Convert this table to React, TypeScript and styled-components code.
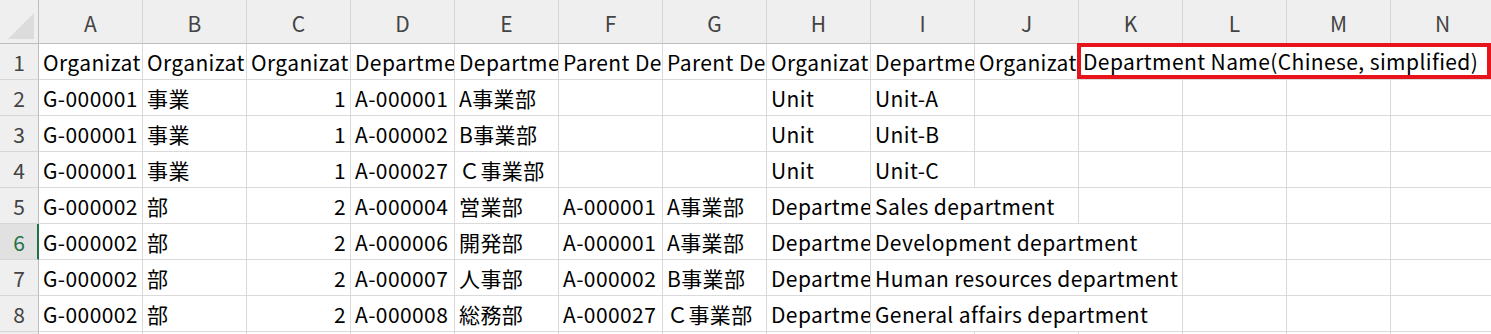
import styled, { createGlobalStyle } from 'styled-components';

const GlobalStyle = createGlobalStyle`
  html, body {
    margin: 0;
    padding: 0;
    background: #ffffff;
    overflow: hidden;
  }
  body {
    font-family: "Noto Sans CJK JP", "Noto Sans", sans-serif;
  }
`;

const COLS = ['A', 'B', 'C', 'D', 'E', 'F', 'G', 'H', 'I', 'J', 'K', 'L', 'M', 'N'];

type CellData = {
  text?: string;
  span?: number;
  align?: 'left' | 'right';
  mark?: boolean;
};

// each row lists its cells left to right; a span covers the empty cells the text runs into
const rows: CellData[][] = [
  [
    { text: 'Organization Code' },
    { text: 'Organization Level Name' },
    { text: 'Organization Level' },
    { text: 'Department Code' },
    { text: 'Department Name' },
    { text: 'Parent Department Code' },
    { text: 'Parent Department Name' },
    { text: 'Organization Level Name(English)' },
    { text: 'Department Name(English)' },
    { text: 'Organization Level Name(Chinese)' },
    { text: 'Department Name(Chinese, simplified)', span: 4, mark: true },
  ],
  [
    { text: 'G-000001' }, { text: '事業' }, { text: '1', align: 'right' }, { text: 'A-000001' },
    { text: 'A事業部' }, {}, {}, { text: 'Unit' }, { text: 'Unit-A' }, {}, {}, {}, {}, {},
  ],
  [
    { text: 'G-000001' }, { text: '事業' }, { text: '1', align: 'right' }, { text: 'A-000002' },
    { text: 'B事業部' }, {}, {}, { text: 'Unit' }, { text: 'Unit-B' }, {}, {}, {}, {}, {},
  ],
  [
    { text: 'G-000001' }, { text: '事業' }, { text: '1', align: 'right' }, { text: 'A-000027' },
    { text: 'Ｃ事業部' }, {}, {}, { text: 'Unit' }, { text: 'Unit-C' }, {}, {}, {}, {}, {},
  ],
  [
    { text: 'G-000002' }, { text: '部' }, { text: '2', align: 'right' }, { text: 'A-000004' },
    { text: '営業部' }, { text: 'A-000001' }, { text: 'A事業部' }, { text: 'Department' },
    { text: 'Sales department', span: 2 }, {}, {}, {}, {},
  ],
  [
    { text: 'G-000002' }, { text: '部' }, { text: '2', align: 'right' }, { text: 'A-000006' },
    { text: '開発部' }, { text: 'A-000001' }, { text: 'A事業部' }, { text: 'Department' },
    { text: 'Development department', span: 3 }, {}, {}, {},
  ],
  [
    { text: 'G-000002' }, { text: '部' }, { text: '2', align: 'right' }, { text: 'A-000007' },
    { text: '人事部' }, { text: 'A-000002' }, { text: 'B事業部' }, { text: 'Department' },
    { text: 'Human resources department', span: 3 }, {}, {}, {},
  ],
  [
    { text: 'G-000002' }, { text: '部' }, { text: '2', align: 'right' }, { text: 'A-000008' },
    { text: '総務部' }, { text: 'A-000027' }, { text: 'Ｃ事業部' }, { text: 'Department' },
    { text: 'General affairs department', span: 3 }, {}, {}, {},
  ],
  COLS.map(() => ({})),
];

const SELECTED_ROW = 6;

const Sheet = styled.div`
  display: grid;
  grid-template-columns: 39px repeat(14, 104px);
  grid-template-rows: 44px;
  grid-auto-rows: 36px;
  width: 100vw;
  height: 100vh;
  overflow: hidden;
  font-size: 21px;
  letter-spacing: 0.4px;
  color: #000000;
`;

const Corner = styled.div`
  background: #efefef;
  border-right: 1px solid #bdbdbd;
  border-bottom: 1px solid #bdbdbd;
  box-sizing: border-box;
  display: flex;
  align-items: flex-end;
  justify-content: flex-end;
  padding: 0 4px 4px 0;
`;

const ColHead = styled.div`
  background: #efefef;
  border-right: 1px solid #d6d6d6;
  border-bottom: 1px solid #bdbdbd;
  box-sizing: border-box;
  display: flex;
  align-items: center;
  justify-content: center;
  padding-top: 3px;
  color: #444444;
  letter-spacing: 0;
`;

const RowHead = styled.div<{ $selected?: boolean }>`
  background: ${(p) => (p.$selected ? '#e1e1e1' : '#efefef')};
  color: ${(p) => (p.$selected ? '#217346' : '#444444')};
  border-right: ${(p) => (p.$selected ? '2px solid #217346' : '1px solid #bdbdbd')};
  border-bottom: 1px solid #d6d6d6;
  box-sizing: border-box;
  display: flex;
  align-items: center;
  justify-content: center;
  padding-left: ${(p) => (p.$selected ? '1px' : '0')};
  letter-spacing: 0;
`;

const Cell = styled.div<{ $span: number; $align: 'left' | 'right'; $mark?: boolean }>`
  grid-column: span ${(p) => p.$span};
  border-right: 1px solid #dadada;
  border-bottom: 1px solid #dadada;
  box-sizing: border-box;
  display: flex;
  align-items: center;
  justify-content: ${(p) => (p.$align === 'right' ? 'flex-end' : 'flex-start')};
  padding: 0 4px 0 4px;
  white-space: nowrap;
  overflow: hidden;
  background: #ffffff;
  ${(p) =>
    p.$mark &&
    `
    margin: -1px 3px 0 -2px;
    padding-left: 6px;
    box-shadow: inset 0 0 0 4px #e8141c;
    position: relative;
    z-index: 1;
  `}
`;

export default function App() {
  return (
    <>
      <GlobalStyle />
      <Sheet>
        <Corner>
          <svg width="26" height="26" viewBox="0 0 26 26">
            <polygon points="26,0 26,26 0,26" fill="#dcdcdc" />
          </svg>
        </Corner>
        {COLS.map((c) => (
          <ColHead key={c}>{c}</ColHead>
        ))}
        {rows.map((cells, r) => (
          <Row key={r} index={r + 1} cells={cells} />
        ))}
      </Sheet>
    </>
  );
}

const Row = ({ index, cells }: { index: number; cells: CellData[] }) => (
  <>
    <RowHead $selected={index === SELECTED_ROW}>{index}</RowHead>
    {cells.map((c, i) => (
      <Cell key={i} $span={c.span || 1} $align={c.align || 'left'} $mark={c.mark}>
        {c.text}
      </Cell>
    ))}
  </>
);
